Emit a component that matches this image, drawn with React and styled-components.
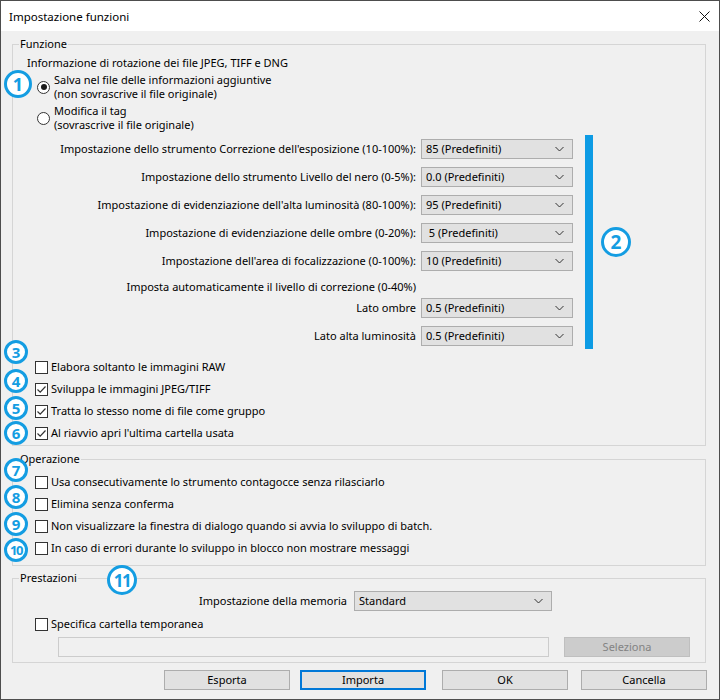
import React from "react";
import styled, { createGlobalStyle } from "styled-components";

const Global = createGlobalStyle`
  html, body { margin: 0; padding: 0; background: #fff; }
  * { box-sizing: border-box; }
`;

const Window = styled.div`
  position: relative;
  width: 720px;
  height: 700px;
  border: 1px solid #4d4d4d;
  background: #f0f0f0;
  display: flex;
  flex-direction: column;
  font-family: "Segoe UI", "Noto Sans", sans-serif;
  font-size: 11px;
  color: #000;
`;

const TitleBar = styled.div`
  height: 30px;
  flex: none;
  background: #fff;
  display: flex;
  align-items: center;
  padding-left: 8px;
  font-size: 11.5px;
`;

const CloseBox = styled.div`
  margin-left: auto;
  width: 30px;
  height: 30px;
  display: flex;
  align-items: center;
  justify-content: center;
`;

const Body = styled.div`
  flex: 1;
  display: flex;
  flex-direction: column;
  padding: 6px 13px 0 11px;
`;

const Group = styled.fieldset`
  margin: ${(p) => p.$mt || 0}px 0 0 0;
  padding: 0;
  border: 1px solid #d5d5d5;
  height: ${(p) => p.$h}px;
  min-width: 0;
`;

const Legend = styled.legend`
  margin-left: 6px;
  padding: 0 1px;
  line-height: 14px;
`;

const GroupContent = styled.div`
  display: flex;
  flex-direction: column;
  padding: ${(p) => p.$pt}px 0 0 ${(p) => p.$pl}px;
`;

const Text = styled.div`
  line-height: 14px;
  white-space: nowrap;
`;

const OptionRow = styled.label`
  display: flex;
  align-items: center;
  gap: ${(p) => p.$gap ?? 3}px;
  margin-top: ${(p) => p.$mt || 0}px;
  margin-left: ${(p) => p.$ml || 0}px;
  min-height: 16px;
  line-height: 14px;
  white-space: nowrap;
`;

const RadioDot = styled.span`
  flex: none;
  width: 13px;
  height: 13px;
  border-radius: 50%;
  border: 1px solid #333;
  background: #fff;
  display: flex;
  align-items: center;
  justify-content: center;
  &::after {
    content: "";
    width: 6px;
    height: 6px;
    border-radius: 50%;
    background: ${(p) => (p.$on ? "#1a1a1a" : "transparent")};
  }
`;

const Box = styled.span`
  flex: none;
  width: 13px;
  height: 13px;
  border: 1px solid #333;
  background: #fff;
  display: flex;
  align-items: center;
  justify-content: center;
`;

const SettingRow = styled.div`
  display: grid;
  grid-template-columns: ${(p) => p.$label}px ${(p) => p.$field}px;
  column-gap: ${(p) => p.$gap}px;
  align-items: center;
  margin-top: ${(p) => p.$mt || 0}px;
`;

const RightLabel = styled.div`
  text-align: right;
  white-space: nowrap;
  line-height: 14px;
`;

const Select = styled.div`
  height: 20px;
  border: 1px solid #adadad;
  background: #e1e1e1;
  display: flex;
  align-items: center;
  padding: 0 8px 0 4px;
  white-space: pre;
  line-height: 14px;
`;

const SelectValue = styled.span`
  flex: 1;
`;

const InputRow = styled.div`
  display: flex;
  align-items: center;
  margin-top: 5px;
`;

const PathInput = styled.div`
  margin-left: ${(p) => p.$ml}px;
  width: 491px;
  height: 20px;
  border: 1px solid #cccccc;
  background: #f0f0f0;
`;

const Button = styled.div`
  flex: none;
  width: 126px;
  height: 20px;
  margin-left: ${(p) => p.$ml || 0}px;
  border: ${(p) => (p.$focus ? "2px solid #0078d7" : p.$disabled ? "1px solid #bfbfbf" : "1px solid #adadad")};
  background: ${(p) => (p.$disabled ? "#cccccc" : "#e1e1e1")};
  color: ${(p) => (p.$disabled ? "#838383" : "#000")};
  display: flex;
  align-items: center;
  justify-content: center;
  line-height: 14px;
`;

const ButtonRow = styled.div`
  display: flex;
  justify-content: flex-end;
  margin-top: 7px;
  margin-right: -1px;
`;

const Badge = styled.div`
  position: absolute;
  width: ${(p) => p.$d}px;
  height: ${(p) => p.$d}px;
  border-radius: 50%;
  border: 3px solid #149de2;
  background: #fff;
  color: #149de2;
  display: flex;
  align-items: center;
  justify-content: center;
  font-family: "Open Sans", "Noto Sans", sans-serif;
  font-weight: 700;
  font-size: ${(p) => p.$fs}px;
  letter-spacing: ${(p) => p.$ls || 0}px;
  line-height: 1;
`;

const AccentBar = styled.div`
  position: absolute;
  left: 584px;
  top: 134px;
  width: 8px;
  height: 214px;
  background: #0d9be4;
`;

const Chevron = () => (
  <svg width="9" height="6" viewBox="0 0 9 6">
    <path d="M0.5 1 L4.5 5 L8.5 1" fill="none" stroke="#333" strokeWidth="1" />
  </svg>
);

const Check = () => (
  <svg width="11" height="11" viewBox="0 0 11 11">
    <path d="M1.5 5.5 L4.2 8.2 L9.5 2.5" fill="none" stroke="#333" strokeWidth="1.2" />
  </svg>
);

const Dropdown = ({ value }) => (
  <Select>
    <SelectValue>{value}</SelectValue>
    <Chevron />
  </Select>
);

const CheckOption = ({ checked, children, mt }) => (
  <OptionRow $mt={mt} $ml={8}>
    <Box>{checked && <Check />}</Box>
    {children}
  </OptionRow>
);

const NumBadge = ({ n, cx, cy, d }) => {
  const two = String(n).length > 1;
  const fs = Math.round(d * (two ? 0.55 : 0.64));
  return (
    <Badge
      $d={d}
      $fs={fs}
      $ls={two ? -1.5 : 0}
      style={{ left: cx - d / 2 - 1, top: cy - d / 2 - 1 }}
    >
      {n}
    </Badge>
  );
};

const settings = [
  ["Impostazione dello strumento Correzione dell'esposizione (10-100%):", "85 (Predefiniti)"],
  ["Impostazione dello strumento Livello del nero (0-5%):", "0.0 (Predefiniti)"],
  ["Impostazione di evidenziazione dell'alta luminosità (80-100%):", "95 (Predefiniti)"],
  ["Impostazione di evidenziazione delle ombre (0-20%):", " 5 (Predefiniti)"],
  ["Impostazione dell'area di focalizzazione (0-100%):", "10 (Predefiniti)"],
];

const badges = [
  [1, 18, 84, 28],
  [2, 616, 242, 30],
  [3, 16, 352, 24],
  [4, 16, 381, 24],
  [5, 16, 408, 24],
  [6, 16, 433, 24],
  [7, 16, 470, 24],
  [8, 16, 497, 24],
  [9, 16, 524, 24],
  [10, 16, 550, 24],
  [11, 122, 580, 30],
];

export default function App() {
  return (
    <>
      <Global />
      <Window>
        <TitleBar>
          Impostazione funzioni
          <CloseBox>
            <svg width="11" height="11" viewBox="0 0 11 11">
              <path d="M0.5 0.5 L10.5 10.5 M10.5 0.5 L0.5 10.5" stroke="#111" strokeWidth="1" />
            </svg>
          </CloseBox>
        </TitleBar>
        <Body>
          <Group $h={409}>
            <Legend>Funzione</Legend>
            <GroupContent $pt={5} $pl={14}>
              <Text>Informazione di rotazione dei file JPEG, TIFF e DNG</Text>
              <OptionRow $mt={3} $ml={10} $gap={4}>
                <RadioDot $on />
                <Text>
                  Salva nel file delle informazioni aggiuntive
                  <br />
                  (non sovrascrive il file originale)
                </Text>
              </OptionRow>
              <OptionRow $mt={3} $ml={10} $gap={4}>
                <RadioDot />
                <Text>
                  Modifica il tag
                  <br />
                  (sovrascrive il file originale)
                </Text>
              </OptionRow>
              {settings.map(([label, value], i) => (
                <SettingRow key={label} $label={389} $field={152} $gap={5} $mt={i === 0 ? 7 : 8}>
                  <RightLabel>{label}</RightLabel>
                  <Dropdown value={value} />
                </SettingRow>
              ))}
              <SettingRow $label={389} $field={152} $gap={5} $mt={9}>
                <RightLabel>Imposta automaticamente il livello di correzione (0-40%)</RightLabel>
              </SettingRow>
              <SettingRow $label={389} $field={152} $gap={5} $mt={4}>
                <RightLabel>Lato ombre</RightLabel>
                <Dropdown value="0.5 (Predefiniti)" />
              </SettingRow>
              <SettingRow $label={389} $field={152} $gap={5} $mt={8}>
                <RightLabel>Lato alta luminosità</RightLabel>
                <Dropdown value="0.5 (Predefiniti)" />
              </SettingRow>
              <CheckOption mt={13}>Elabora soltanto le immagini RAW</CheckOption>
              <CheckOption checked mt={6}>Sviluppa le immagini JPEG/TIFF</CheckOption>
              <CheckOption checked mt={6}>Tratta lo stesso nome di file come gruppo</CheckOption>
              <CheckOption checked mt={6}>Al riavvio apri l'ultima cartella usata</CheckOption>
            </GroupContent>
          </Group>

          <Group $h={114} $mt={6}>
            <Legend>Operazione</Legend>
            <GroupContent $pt={8} $pl={14}>
              <CheckOption>Usa consecutivamente lo strumento contagocce senza rilasciarlo</CheckOption>
              <CheckOption mt={6}>Elimina senza conferma</CheckOption>
              <CheckOption mt={6}>Non visualizzare la finestra di dialogo quando si avvia lo sviluppo di batch.</CheckOption>
              <CheckOption mt={6}>In caso di errori durante lo sviluppo in blocco non mostrare messaggi</CheckOption>
            </GroupContent>
          </Group>

          <Group $h={92} $mt={5}>
            <Legend>Prestazioni</Legend>
            <GroupContent $pt={6} $pl={14}>
              <SettingRow $label={320} $field={198} $gap={7}>
                <RightLabel>Impostazione della memoria</RightLabel>
                <Dropdown value="Standard" />
              </SettingRow>
              <CheckOption mt={5}>Specifica cartella temporanea</CheckOption>
              <InputRow>
                <PathInput $ml={31} />
                <Button $ml={15} $disabled>Seleziona</Button>
              </InputRow>
            </GroupContent>
          </Group>

          <ButtonRow>
            <Button>Esporta</Button>
            <Button $ml={10} $focus>Importa</Button>
            <Button $ml={16}>OK</Button>
            <Button $ml={13}>Cancella</Button>
          </ButtonRow>
        </Body>
        <AccentBar />
        {badges.map(([n, cx, cy, d]) => (
          <NumBadge key={n} n={n} cx={cx} cy={cy} d={d} />
        ))}
      </Window>
    </>
  );
}
